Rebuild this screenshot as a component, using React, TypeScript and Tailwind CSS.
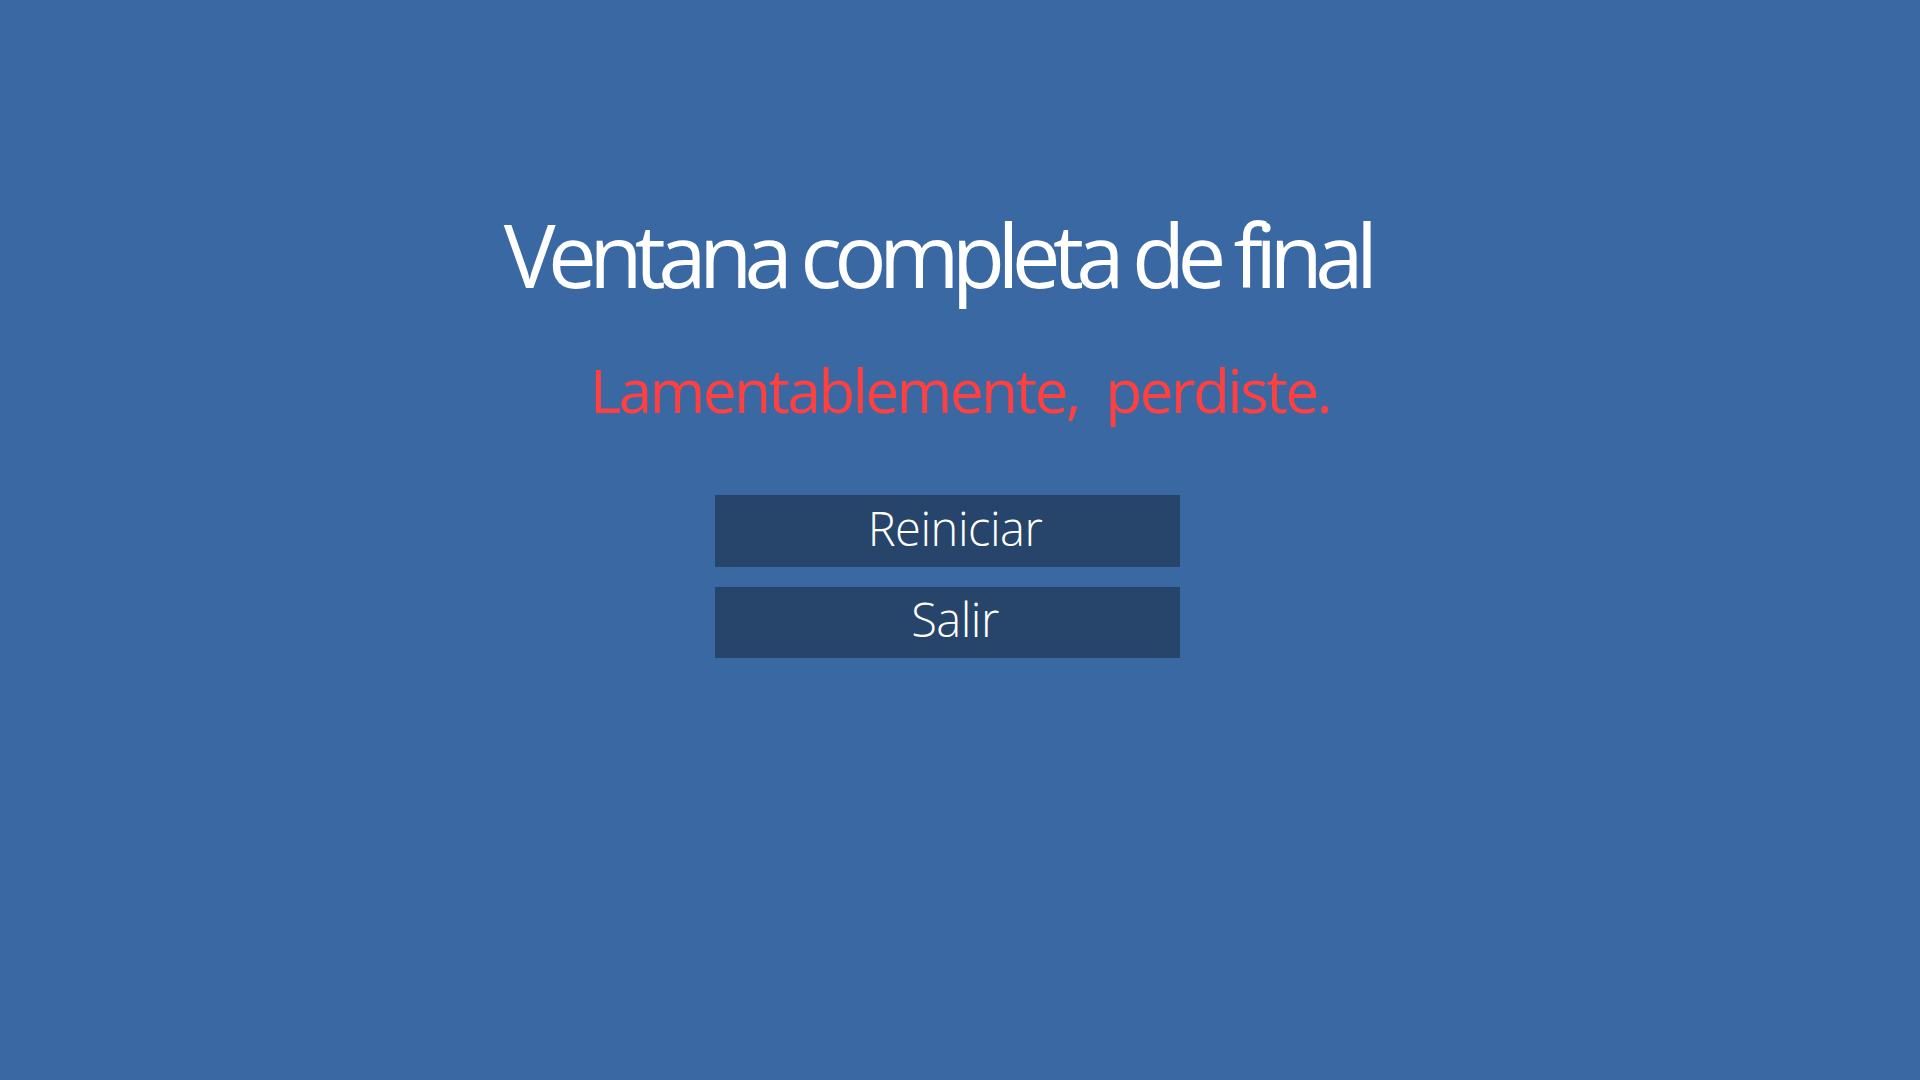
const App = () => {
    return (
        <div className="w-full h-screen bg-[#3968a3] flex flex-col items-center font-['Open_Sans',sans-serif] overflow-hidden">
            {/* Title */}
            <h1 className="mt-[210px] mr-[46px] text-[87px] leading-[88px] text-white tracking-[-0.088em] whitespace-nowrap">
                Ventana completa de final
            </h1>

            {/* Result message */}
            <p className="mt-[62px] text-[60px] leading-[60px] text-[#ff4040] tracking-[-0.04em] whitespace-pre">
                Lamentablemente,  perdiste.
            </p>

            {/* Buttons */}
            <div className="mt-[75px] mr-[25px] w-[465px] flex flex-col gap-[20px]">
                <button className="h-[72px] w-full bg-[#27456a] text-white text-[47px] font-light leading-none flex items-center justify-center pl-[15px] pb-[6px] tracking-[-0.01em]">
                    Reiniciar
                </button>
                <button className="h-[71px] w-full bg-[#27456a] text-white text-[47px] font-light leading-none flex items-center justify-center pl-[15px] pb-[6px] tracking-[-0.01em]">
                    Salir
                </button>
            </div>
        </div>
    );
};

export default App;
